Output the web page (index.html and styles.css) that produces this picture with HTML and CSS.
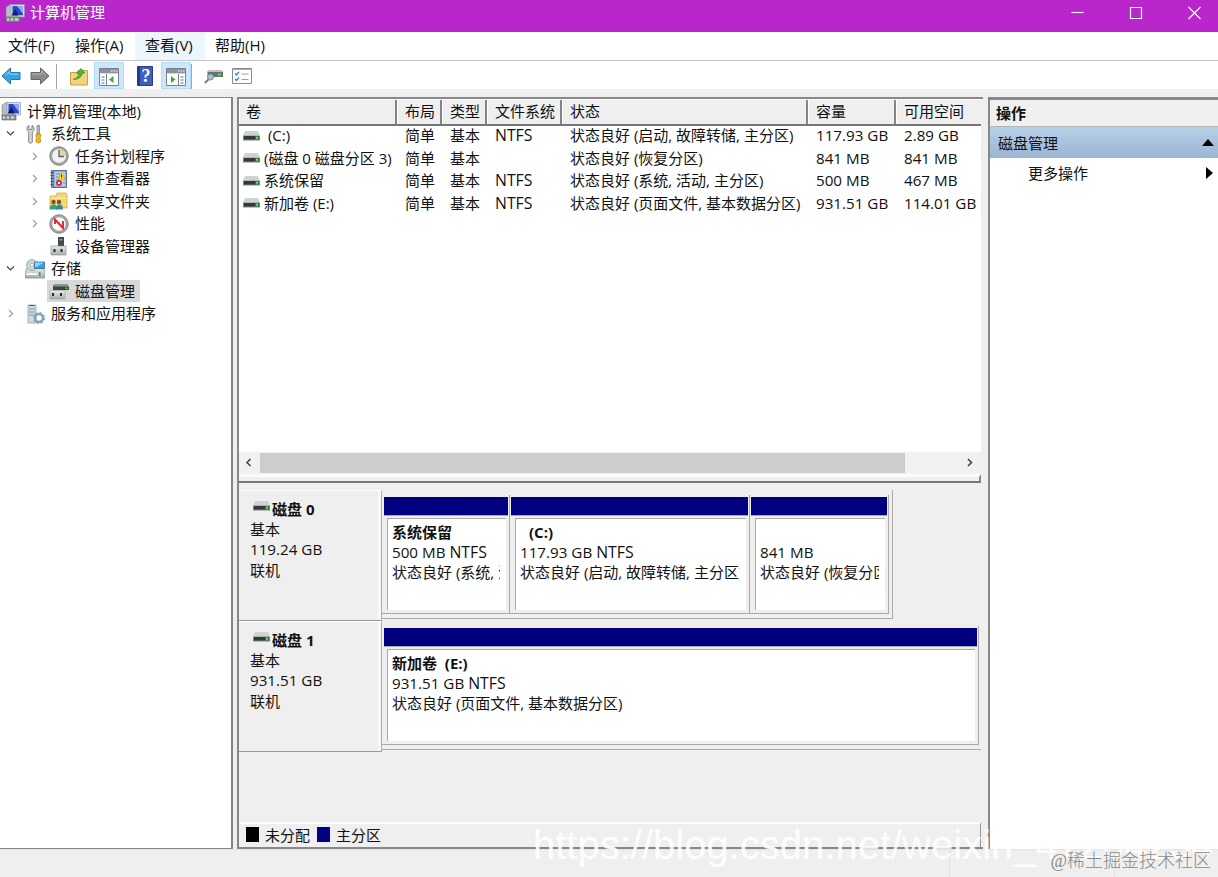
FILE: index.html
```html
<!DOCTYPE html>
<html lang="zh-CN">
<head>
    <meta charset="utf-8">
    <meta name="viewport" content="width=device-width, initial-scale=1">
    <title>计算机管理</title>
    <link rel="stylesheet" href="styles.css">
</head>
<body>
    <svg class="defs" width="0" height="0">
        <linearGradient id="steel" x1="0" y1="0" x2="0" y2="1">
            <stop offset="0" stop-color="#e8ebeb"/>
            <stop offset="1" stop-color="#a9adad"/>
        </linearGradient>
        <symbol id="computer" viewBox="0 0 20 20">
            <path d="M1 4l5-3 3 1v12l-4 2-4-1z" fill="#b9bfc4" stroke="#7b8288" stroke-width=".6"/>
            <path d="M6 1.500h13.500V14H6z" fill="#d9dde8" stroke="#8c93a0" stroke-width=".6"/>
            <path d="M7.500 3h10.500v9.300H7.500z" fill="#2b45c8"/>
            <path d="M12 3h6v8z" fill="#8fa8f4"/>
            <path d="M6.500 12.500l4-6.500 3 6.500z" fill="#111d70"/>
            <path d="M1 14h14v5H1z" fill="#87948f" stroke="#59635f" stroke-width=".6"/>
            <path d="M2 15.500h2v2H2zm4 0h2v2H6zm4 0h3v2h-3z" fill="#d7dfd9"/>
        </symbol>
        <symbol id="tools" viewBox="0 0 20 20">
            <path d="M4 1.500c-2.500 1-3 5-.3 6.500V18c0 1.500 3.600 1.500 3.600 0V8C10 7 9.500 2.500 7 1.500V5.500H4z" fill="#d5d8da" stroke="#777" stroke-width=".9"/>
            <path d="M12 1.500h2.500V10H12z" fill="#bbb" stroke="#777" stroke-width=".7"/>
            <path d="M11 10h4.500v3l-.8 1 .8 1v3q-2.200 2-4.500 0v-3l.8-1-.8-1z" fill="#f3b61d" stroke="#b9820c" stroke-width=".7"/>
        </symbol>
        <symbol id="clock" viewBox="0 0 20 20">
            <circle cx="10" cy="10" r="9.200" fill="#a9a9a9" stroke="#7c7c7c"/>
            <circle cx="10" cy="10" r="7.200" fill="#f1f3f6" stroke="#999" stroke-width=".6"/>
            <path d="M10 10V2.800A7.200 7.200 0 0 1 17.200 10z" fill="#ecd596"/>
            <path d="M10 4v6.500h5" fill="none" stroke="#555e78" stroke-width="1.300"/>
        </symbol>
        <symbol id="events" viewBox="0 0 20 20">
            <path d="M2.500 1.500h15v17h-15z" fill="#6f8fc4" stroke="#5a6f93"/>
            <path d="M5.500 2.500h11v15h-11z" fill="#bccfea"/>
            <path d="M1.500 3.500h3m-3 3h3m-3 3h3m-3 3h3m-3 3h3" stroke="#4b566d"/>
            <path d="M7 5h4M7 8h3M7 11h3M14 14h2" stroke="#7890b8"/>
            <path d="M12.500 3l3.500 7H9z" fill="#f9db25" stroke="#ba990b" stroke-width=".5"/>
            <path d="M12.500 5.500v3" stroke="#333"/>
            <circle cx="10" cy="14" r="3" fill="#dc2f37"/>
            <path d="M9 13l2 2m0-2l-2 2" stroke="#fff"/>
        </symbol>
        <symbol id="shared" viewBox="0 0 20 20">
            <path d="M1 5h6l1-3h9l1 2v13H1z" fill="#f7d774" stroke="#c9a13d" stroke-width=".7"/>
            <path d="M2 7h15" stroke="#fff0b5"/>
            <circle cx="4.500" cy="11" r="2.200" fill="#765239"/>
            <circle cx="10" cy="11" r="2.200" fill="#765239"/>
            <path d="M.5 18.500q0-5 4-5t3.500 5z" fill="#30a777"/>
            <path d="M7 18.500q0-5 3.500-5t3.500 5z" fill="#2c89aa"/>
        </symbol>
        <symbol id="perf" viewBox="0 0 20 20">
            <circle cx="10" cy="10" r="9.200" fill="#adadad" stroke="#7c7c7c"/>
            <circle cx="10" cy="10" r="7.200" fill="#fbfbfb" stroke="#8b8b8b" stroke-width=".7"/>
            <path d="M6 10V5.500l8 8.500V7" fill="none" stroke="#d9252b" stroke-width="1.900"/>
        </symbol>
        <symbol id="device" viewBox="0 0 20 20">
            <path d="M9 1h6v10H9z" fill="#434a4d"/>
            <path d="M10.500 3h3v1.500h-3z" fill="#8b9393"/>
            <path d="M2 10h15v9H2z" fill="url(#steel)" stroke="#858a8a" stroke-width=".6"/>
            <path d="M4.500 13h2v3h-2zm7 0h2v3h-2z" fill="#292929"/>
        </symbol>
        <symbol id="storage" viewBox="0 0 20 20">
            <path d="M2 9h16l2 4v5q0 1-1 1H1q-1 0-1-1v-5z" fill="url(#steel)" stroke="#7d8282" stroke-width=".7"/>
            <circle cx="7" cy="6" r="5.500" fill="#ccd6d9" stroke="#8a989f" stroke-width=".7"/>
            <circle cx="7" cy="6" r="1.700" fill="#fff" stroke="#8a989f" stroke-width=".6"/>
            <path d="M9.500 3h10v6.500h-10z" fill="#32a6e8" stroke="#3d6685" stroke-width=".8"/>
            <path d="M10 3.500h9l-9 5z" fill="#91d5fa"/>
            <path d="M1.500 14h11v2h-11z" fill="#f5f6f5"/>
            <path d="M14 13h1.500v4H14z" fill="#2ba649"/>
        </symbol>
        <symbol id="diskmgmt" viewBox="0 0 20 20">
            <path d="M4 5l2-2h12l2 3v3H4z" fill="#3c4442"/>
            <path d="M6 3h12l1.500 2.500h-15z" fill="#909794"/>
            <path d="M16.500 6.500h2v1.500h-2z" fill="#4ddb63"/>
            <path d="M1 9.500h15V18H1z" fill="url(#steel)" stroke="#999" stroke-width=".5"/>
            <path d="M3 12h2v3H3zm8 0h2v3h-2z" fill="#292929"/>
        </symbol>
        <symbol id="services" viewBox="0 0 20 20">
            <path d="M3 1h8v18H3z" fill="#cfdbe0" stroke="#8799a2" stroke-width=".7"/>
            <path d="M4.500 1.500h5" stroke="#555"/>
            <path d="M4 5h6M4 8h6M4 11h6" stroke="#8499a4"/>
            <circle cx="14" cy="14" r="4" fill="none" stroke="#80a5c3" stroke-width="2.600"/>
            <circle cx="14" cy="14" r="5.300" fill="none" stroke="#80a5c3" stroke-width="1.500" stroke-dasharray="2 2.160"/>
        </symbol>
        <symbol id="drive" viewBox="0 0 17 10">
            <path d="M2 0h13l2 4.500H0z" fill="#cfd3d1"/>
            <path d="M0 4.500h17V9.500H0z" fill="#7c8480"/>
            <path d="M1 5h11v3.500H1z" fill="#343a37"/>
            <path d="M12 5h4v3.500h-4z" fill="#3c6a45"/>
            <path d="M13 5.800h2v2h-2z" fill="#52ef65"/>
        </symbol>
        <symbol id="window" viewBox="0 0 20 18">
            <path d="M.5.500h19v17H.5z" fill="#fff" stroke="#778089"/>
            <path d="M1 1h18v4H1z" fill="#89929d"/>
            <path d="M1.500 5.500h17" stroke="#d2d7dc"/>
            <path d="M12 3h1.500m1 0H16m1 0h1.500" stroke="#fff"/>
        </symbol>
    </svg>

    <header class="titlebar">
        <svg class="app-icon"><use href="#computer"/></svg>
        <span class="title">计算机管理</span>
        <div class="controls">
            <svg viewBox="0 0 13 13"><path d="M.5 6.500h12"/></svg>
            <svg viewBox="0 0 13 13"><path d="M1.500 1.500h11v11h-11z"/></svg>
            <svg viewBox="0 0 13 13"><path d="M.5 1l12 12M12.500 1l-12 12"/></svg>
        </div>
    </header>

    <nav class="menubar">
        <span class="menu">文件(F)</span>
        <span class="menu">操作(A)</span>
        <span class="menu hover">查看(V)</span>
        <span class="menu">帮助(H)</span>
    </nav>

    <div class="toolbar">
        <svg class="tool back" viewBox="0 0 20 18"><path d="M1 9l8.500-8v4.500H19v7H9.500V17z" fill="#35a4e2" stroke="#2278b4"/><path d="M4 8.500l4.500-4V7H18" fill="none" stroke="#8dd2f5"/></svg>
        <svg class="tool forward" viewBox="0 0 20 18"><path d="M19 9l-8.500-8v4.500H1v7h9.500V17z" fill="#8a8a8a" stroke="#666"/><path d="M2 7h9.500V4l4.500 4" fill="none" stroke="#b5b5b5"/></svg>
        <i class="sep"></i>
        <svg class="tool folder" viewBox="0 0 18 18"><path d="M.5 5H7l1-2h9.500v14.500H.5z" fill="#f5d479" stroke="#c6a14c"/><path d="M3 12q5-1 6-6L6.500 6 11 1l4 4.500-2.500.2Q11 12 3 12z" fill="#48b83c" stroke="#32852a" stroke-width=".6"/></svg>
        <span class="toggle">
            <svg viewBox="0 0 20 18"><use href="#window"/><path d="M7.500 6v11.500" stroke="#778089"/><path d="M2.500 9h3m-3 3h3m-3 3h3" stroke="#4f6f9a"/><path d="M14.500 8v7L10 11.500z" fill="#39ae32"/></svg>
        </span>
        <svg class="tool help" viewBox="0 0 16 20"><path d="M.5.500h15v19H.5z" fill="#3d5fc0" stroke="#273d8c"/><path d="M1 1h2v18H1z" fill="#243a91"/><text x="9" y="16" class="question">?</text></svg>
        <span class="toggle">
            <svg viewBox="0 0 20 18"><use href="#window"/><path d="M12.500 6v11.500" stroke="#778089"/><path d="M14.500 9h3m-3 3h3m-3 3h3" stroke="#4f6f9a"/><path d="M5 8v7l4.500-3.500z" fill="#39ae32"/></svg>
        </span>
        <i class="sep last"></i>
        <svg class="tool inspect" viewBox="0 0 20 18"><path d="M3.500 4.500L5.500 3h11l2.500 2v5H3.500z" fill="#66736f"/><path d="M5.500 3h11L19 5H3z" fill="#bac1be"/><path d="M14 6.500h3v2h-3z" fill="#49e35e"/><circle cx="6.500" cy="10" r="3" fill="#a9c2ce" stroke="#788b94"/><path d="M4.500 12.500L.8 16" stroke="#777" stroke-width="1.800"/></svg>
        <svg class="tool checks" viewBox="0 0 20 16"><path d="M.5.500h19v15H.5z" fill="#fff" stroke="#858c92"/><path d="M1 1.500h18" stroke="#a6adb3"/><path d="M3 5.500l1.500 1.500L7 4M3 11l1.500 1.500L7 9.500" fill="none" stroke="#3682cc" stroke-width="1.300"/><path d="M9.500 6h7m-7 5.500h7" stroke="#98a0a8"/></svg>
    </div>

    <main class="workspace">
        <aside class="tree">
            <div class="node root"><svg class="icon"><use href="#computer"/></svg><span>计算机管理(本地)</span></div>
            <div class="node level1"><svg class="arrow open" viewBox="0 0 9 9"><path d="M1 2.500l3.500 3.500L8 2.500"/></svg><svg class="icon"><use href="#tools"/></svg><span>系统工具</span></div>
            <div class="node level2"><svg class="arrow" viewBox="0 0 9 9"><path d="M3 1l3.500 3.500L3 8"/></svg><svg class="icon"><use href="#clock"/></svg><span>任务计划程序</span></div>
            <div class="node level2"><svg class="arrow" viewBox="0 0 9 9"><path d="M3 1l3.500 3.500L3 8"/></svg><svg class="icon"><use href="#events"/></svg><span>事件查看器</span></div>
            <div class="node level2"><svg class="arrow" viewBox="0 0 9 9"><path d="M3 1l3.500 3.500L3 8"/></svg><svg class="icon"><use href="#shared"/></svg><span>共享文件夹</span></div>
            <div class="node level2"><svg class="arrow" viewBox="0 0 9 9"><path d="M3 1l3.500 3.500L3 8"/></svg><svg class="icon"><use href="#perf"/></svg><span>性能</span></div>
            <div class="node level2"><i class="arrow"></i><svg class="icon"><use href="#device"/></svg><span>设备管理器</span></div>
            <div class="node level1"><svg class="arrow open" viewBox="0 0 9 9"><path d="M1 2.500l3.500 3.500L8 2.500"/></svg><svg class="icon"><use href="#storage"/></svg><span>存储</span></div>
            <div class="node level2"><i class="arrow"></i><div class="selected"><svg class="icon"><use href="#diskmgmt"/></svg><span>磁盘管理</span></div></div>
            <div class="node level1"><svg class="arrow" viewBox="0 0 9 9"><path d="M3 1l3.500 3.500L3 8"/></svg><svg class="icon"><use href="#services"/></svg><span>服务和应用程序</span></div>
        </aside>

        <section class="content">
            <div class="volume-list">
                <div class="row head">
                    <span>卷</span><span>布局</span><span>类型</span><span>文件系统</span><span>状态</span><span>容量</span><span>可用空间</span>
                </div>
                <div class="row"><span><svg class="drive"><use href="#drive"/></svg>&nbsp;(C:)</span><span>简单</span><span>基本</span><span class="fs">NTFS</span><span>状态良好 (启动, 故障转储, 主分区)</span><span class="size">117.93 GB</span><span class="size">2.89 GB</span></div>
                <div class="row"><span><svg class="drive"><use href="#drive"/></svg>(磁盘 0 磁盘分区 3)</span><span>简单</span><span>基本</span><span></span><span>状态良好 (恢复分区)</span><span class="size">841 MB</span><span class="size">841 MB</span></div>
                <div class="row"><span><svg class="drive"><use href="#drive"/></svg>系统保留</span><span>简单</span><span>基本</span><span class="fs">NTFS</span><span>状态良好 (系统, 活动, 主分区)</span><span class="size">500 MB</span><span class="size">467 MB</span></div>
                <div class="row"><span><svg class="drive"><use href="#drive"/></svg>新加卷 (E:)</span><span>简单</span><span>基本</span><span class="fs">NTFS</span><span>状态良好 (页面文件, 基本数据分区)</span><span class="size">931.51 GB</span><span class="size">114.01 GB</span></div>
            </div>
            <div class="scrollbar">
                <svg viewBox="0 0 9 9"><path d="M6.500 1L3 4.500 6.500 8"/></svg>
                <i class="thumb"></i>
                <svg viewBox="0 0 9 9"><path d="M2 1l3.500 3.500L2 8"/></svg>
            </div>
            <div class="splitter"></div>

            <div class="disks">
                <div class="disk">
                    <div class="disk-label">
                        <b><svg class="drive"><use href="#drive"/></svg>磁盘 0</b>
                        <span>基本</span><span class="size">119.24 GB</span><span>联机</span>
                    </div>
                    <div class="volumes">
                        <div class="volume reserved"><div class="bar"></div><div class="info"><b>系统保留</b><span class="size">500 MB <i class="fs">NTFS</i></span><span>状态良好 (系统, 活动, 主分区)</span></div></div>
                        <div class="volume system"><div class="bar"></div><div class="info"><b class="letter">(C:)</b><span class="size">117.93 GB <i class="fs">NTFS</i></span><span>状态良好 (启动, 故障转储, 主分区)</span></div></div>
                        <div class="volume recovery"><div class="bar"></div><div class="info"><b>&nbsp;</b><span class="size">841 MB</span><span>状态良好 (恢复分区)</span></div></div>
                    </div>
                </div>
                <div class="disk">
                    <div class="disk-label">
                        <b><svg class="drive"><use href="#drive"/></svg>磁盘 1</b>
                        <span>基本</span><span class="size">931.51 GB</span><span>联机</span>
                    </div>
                    <div class="volumes wide">
                        <div class="volume data"><div class="bar"></div><div class="info"><b>新加卷&nbsp; (E:)</b><span class="size">931.51 GB <i class="fs">NTFS</i></span><span>状态良好 (页面文件, 基本数据分区)</span></div></div>
                    </div>
                </div>
            </div>
            <div class="legend">
                <i class="swatch black"></i><span>未分配</span>
                <i class="swatch navy"></i><span>主分区</span>
            </div>
        </section>

        <aside class="actions">
            <div class="actions-title">操作</div>
            <div class="actions-group"><span>磁盘管理</span><svg class="up" viewBox="0 0 12 7"><path d="M6 0l6 7H0z"/></svg></div>
            <div class="actions-item"><span>更多操作</span><svg class="more" viewBox="0 0 7 12"><path d="M0 0l7 6-7 6z"/></svg></div>
        </aside>
    </main>

    <footer class="statusbar"><i></i><i></i></footer>

    <div class="watermark">https://blog.csdn.net/weixin_47204234</div>
    <div class="credit">@稀土掘金技术社区</div>
</body>
</html>
```

FILE: styles.css
```css
* {
    box-sizing: border-box;
}
html, body {
    margin: 0;
    padding: 0;
}
body {
    display: flex;
    flex-direction: column;
    position: relative;
    width: 1218px;
    height: 877px;
    overflow: hidden;
    background: #efefef;
    color: #111;
    font: 15px/22px "Open Sans", "Noto Sans CJK SC", sans-serif;
    white-space: nowrap;
}
svg {
    display: block;
    flex: none;
}
.defs {
    position: absolute;
}

/* Title, menu and tool bars */
.titlebar {
    display: flex;
    align-items: center;
    height: 32px;
    padding: 0 0 7px 5px;
    background: #b826cc;
    color: #fff;
}
.app-icon {
    width: 20px;
    height: 20px;
    margin-right: 5px;
}
.title {
    padding-bottom: 1px;
}
.controls {
    display: flex;
    gap: 45px;
    margin-left: auto;
    padding-right: 17px;
}
.controls svg {
    width: 13px;
    height: 13px;
    overflow: visible;
    fill: none;
    stroke: #fff;
    stroke-width: 1.2;
}
.controls svg:last-child {
    margin-left: 1px;
}
.menubar {
    display: flex;
    height: 29px;
    background: #fff;
    border-bottom: 1px solid #c4c4c4;
}
.menu {
    width: 70px;
    padding-left: 10px;
    line-height: 27px;
}
.menu:first-child {
    width: 65px;
    padding-left: 8px;
}
.menu.hover {
    background: #edf5fd;
}
.toolbar {
    display: flex;
    align-items: center;
    height: 28px;
    padding: 0 1px;
    background: #fff;
}
.tool {
    width: 20px;
    height: 18px;
    margin-top: 2px;
}
.forward {
    margin-left: 9px;
}
.sep {
    width: 1px;
    height: 25px;
    margin: 2px 13px 0 6px;
    background: #a5a5a5;
}
.sep.last {
    margin: 2px 12px 0 0;
}
.folder {
    width: 18px;
    height: 19px;
}
.toggle {
    display: flex;
    align-items: center;
    justify-content: center;
    width: 30px;
    height: 27px;
    margin-left: 6px;
    padding-top: 4px;
    background: #cde7fa;
    border: 1px solid #b5dcf6;
}
.toggle svg {
    width: 20px;
    height: 18px;
}
.help {
    width: 16px;
    height: 20px;
    margin-left: 13px;
}
.help + .toggle {
    margin-left: 8px;
}
.question {
    fill: #fff;
    font: bold 18px "Liberation Serif", serif;
    text-anchor: middle;
}
.checks {
    height: 16px;
    margin-left: 8px;
    margin-top: 1px;
}

/* Console tree */
.workspace {
    display: flex;
    height: 752px;
    margin-top: 8px;
}
.tree {
    width: 233px;
    margin-right: 4px;
    padding-top: 2px;
    background: #fff;
    border: solid #858585;
    border-width: 1px 2px 1px 0;
}
.node {
    display: flex;
    align-items: center;
    height: 22.5px;
}
.icon {
    width: 20px;
    height: 20px;
}
.node span {
    margin-left: 6px;
    padding-bottom: 1px;
}
.node.level1 {
    padding-left: 6px;
}
.node.level2 {
    padding-left: 30px;
}
.root .icon {
    margin-left: 1px;
}
.arrow {
    width: 9px;
    height: 9px;
    margin-right: 10px;
    fill: none;
    stroke: #9b9b9b;
    stroke-width: 1.2;
}
.arrow.open {
    stroke: #444;
}
.selected {
    display: flex;
    align-items: center;
    height: 22px;
    margin-left: -2px;
    padding: 0 5px 0 2px;
    background: #d8d8d8;
}

/* Volume list */
.content {
    display: flex;
    flex-direction: column;
    width: 746px;
    margin-right: 5px;
    border: solid #888;
    border-width: 2px 0 2px 2px;
}
.content, .tree {
    flex: none;
}
.volume-list {
    height: 353px;
    margin-right: 2px;
    background: #fff;
}
.row {
    display: grid;
    grid-template-columns: 158px 45px 45px 75px 246px 88px 85px;
    height: 22.5px;
    line-height: 19px;
}
.row span {
    display: flex;
    align-items: center;
    padding: 0 0 3px 8px;
}
.row span:first-child {
    padding-left: 4px;
}
.row.head {
    height: 27px;
    background: #efefef;
    border-top: 1px solid #fff;
    border-bottom: 2px solid #777;
}
.row.head span {
    border-left: 1px solid #fff;
    border-right: 2px solid #858585;
    padding: 0 0 1px 7px;
}
.row.head span:first-child {
    padding-left: 6px;
}
.row.head span:last-child {
    border-right: 0;
}
.size {
    font-size: 15.2px;
}
.fs {
    font-size: 15.8px;
    font-style: normal;
}
.drive {
    width: 17px;
    height: 10px;
    margin-right: 4px;
}
.scrollbar {
    display: flex;
    align-items: center;
    height: 22px;
    margin-right: 2px;
    padding: 0 6px 2px 5px;
    background: #f1f1f1;
}
.scrollbar svg {
    width: 9px;
    height: 9px;
    fill: none;
    stroke: #444;
    stroke-width: 1.6;
}
.thumb {
    width: 645px;
    height: 20px;
    margin: 2px auto 0 7px;
    background: #cdcdcd;
}
.splitter {
    height: 9px;
    margin-right: 2px;
    border-top: 3px solid #fafafa;
    border-right: 2px solid #888;
    border-bottom: 2px solid #777;
}

/* Graphical disk view */
.disks {
    height: 339px;
    padding-top: 7px;
    margin-right: 2px;
}
.disk {
    display: flex;
    height: 131px;
}
.disk-label {
    display: flex;
    flex-direction: column;
    width: 143px;
    padding: 8px 0 0 11px;
    line-height: 20.2px;
    border-top: 1px solid #fff;
    border-right: 1px solid #aaa;
    border-bottom: 1px solid #999;
    box-shadow: inset -3px 0 #f8f8f8;
}
.disk-label b {
    display: flex;
    padding-left: 3px;
}
.disk-label .drive {
    margin-right: 2px;
    margin-top: 2px;
}
.volumes {
    display: flex;
    width: 511px;
    height: 129px;
    padding-top: 5px;
    border: solid #aaa;
    border-width: 0 1px 1px 0;
}
.volumes.wide {
    width: 599px;
    border-right: 0;
}
.volume {
    height: 119px;
    padding: 2px 1px 0;
    border: solid #aaa;
    border-width: 0 1px 1px 0;
}
.volume:first-child {
    padding-left: 2px;
}
.reserved {
    width: 128px;
}
.system {
    width: 240px;
}
.recovery {
    width: 139px;
}
.data {
    width: 597px;
}
.bar {
    height: 19px;
    background: #000080;
    border-bottom: 1px solid #aaa;
}
.info {
    display: flex;
    flex-direction: column;
    height: 92px;
    margin: 2px 2px 0 4px;
    padding: 3px 0 0 4px;
    overflow: hidden;
    background: #fff;
    border: solid #aaa;
    border-width: 1px 0 0 1px;
    line-height: 20.2px;
}
.volume:first-child .info {
    margin-left: 3px;
}
.info span {
    height: 20.2px;
    margin-right: 6px;
    overflow: hidden;
}
.letter {
    padding-left: 9px;
}
.legend {
    display: flex;
    align-items: center;
    height: 25px;
    margin-right: 2px;
    padding: 0 0 2px 7px;
    border-top: 2px solid #fcfcfc;
    border-right: 1px solid #999;
}
.swatch {
    width: 13px;
    height: 15px;
    margin-right: 6px;
    background: #000;
}
.swatch.navy {
    margin-left: 7px;
    background: #000080;
}

/* Actions pane */
.actions {
    flex: 1;
    background: #fff;
    border: solid #888;
    border-width: 3px 0 0 2px;
}
.actions-title {
    height: 27px;
    padding-left: 6px;
    line-height: 26px;
    font-weight: bold;
    background: #f0f0f0;
    border-bottom: 1px solid #b5b5b5;
}
.actions-group {
    display: flex;
    align-items: center;
    justify-content: space-between;
    height: 31px;
    padding: 0 4px 0 8px;
    background: linear-gradient(#b8cfe7, #9ab5d3);
}
.up {
    width: 12px;
    height: 7px;
}
.actions-item {
    display: flex;
    align-items: center;
    justify-content: space-between;
    height: 29px;
    padding: 0 5px 0 38px;
}
.more {
    width: 7px;
    height: 12px;
}

.statusbar {
    display: flex;
    height: 28px;
    border-top: 1px solid #e4e4e4;
}
.statusbar i {
    width: 950px;
    border-right: 1px solid #e1e1e1;
}
.statusbar i + i {
    width: 165px;
}

/* Overlaid marks */
.watermark {
    position: absolute;
    left: 533px;
    top: 822px;
    color: rgba(255, 255, 255, .92);
    font: 40px/46px "Liberation Sans", sans-serif;
}
.credit {
    position: absolute;
    right: 7px;
    top: 848px;
    color: #888;
    font: 18px/26px "Liberation Serif", "Noto Sans CJK SC", serif;
    font-weight: 300;
}
```
